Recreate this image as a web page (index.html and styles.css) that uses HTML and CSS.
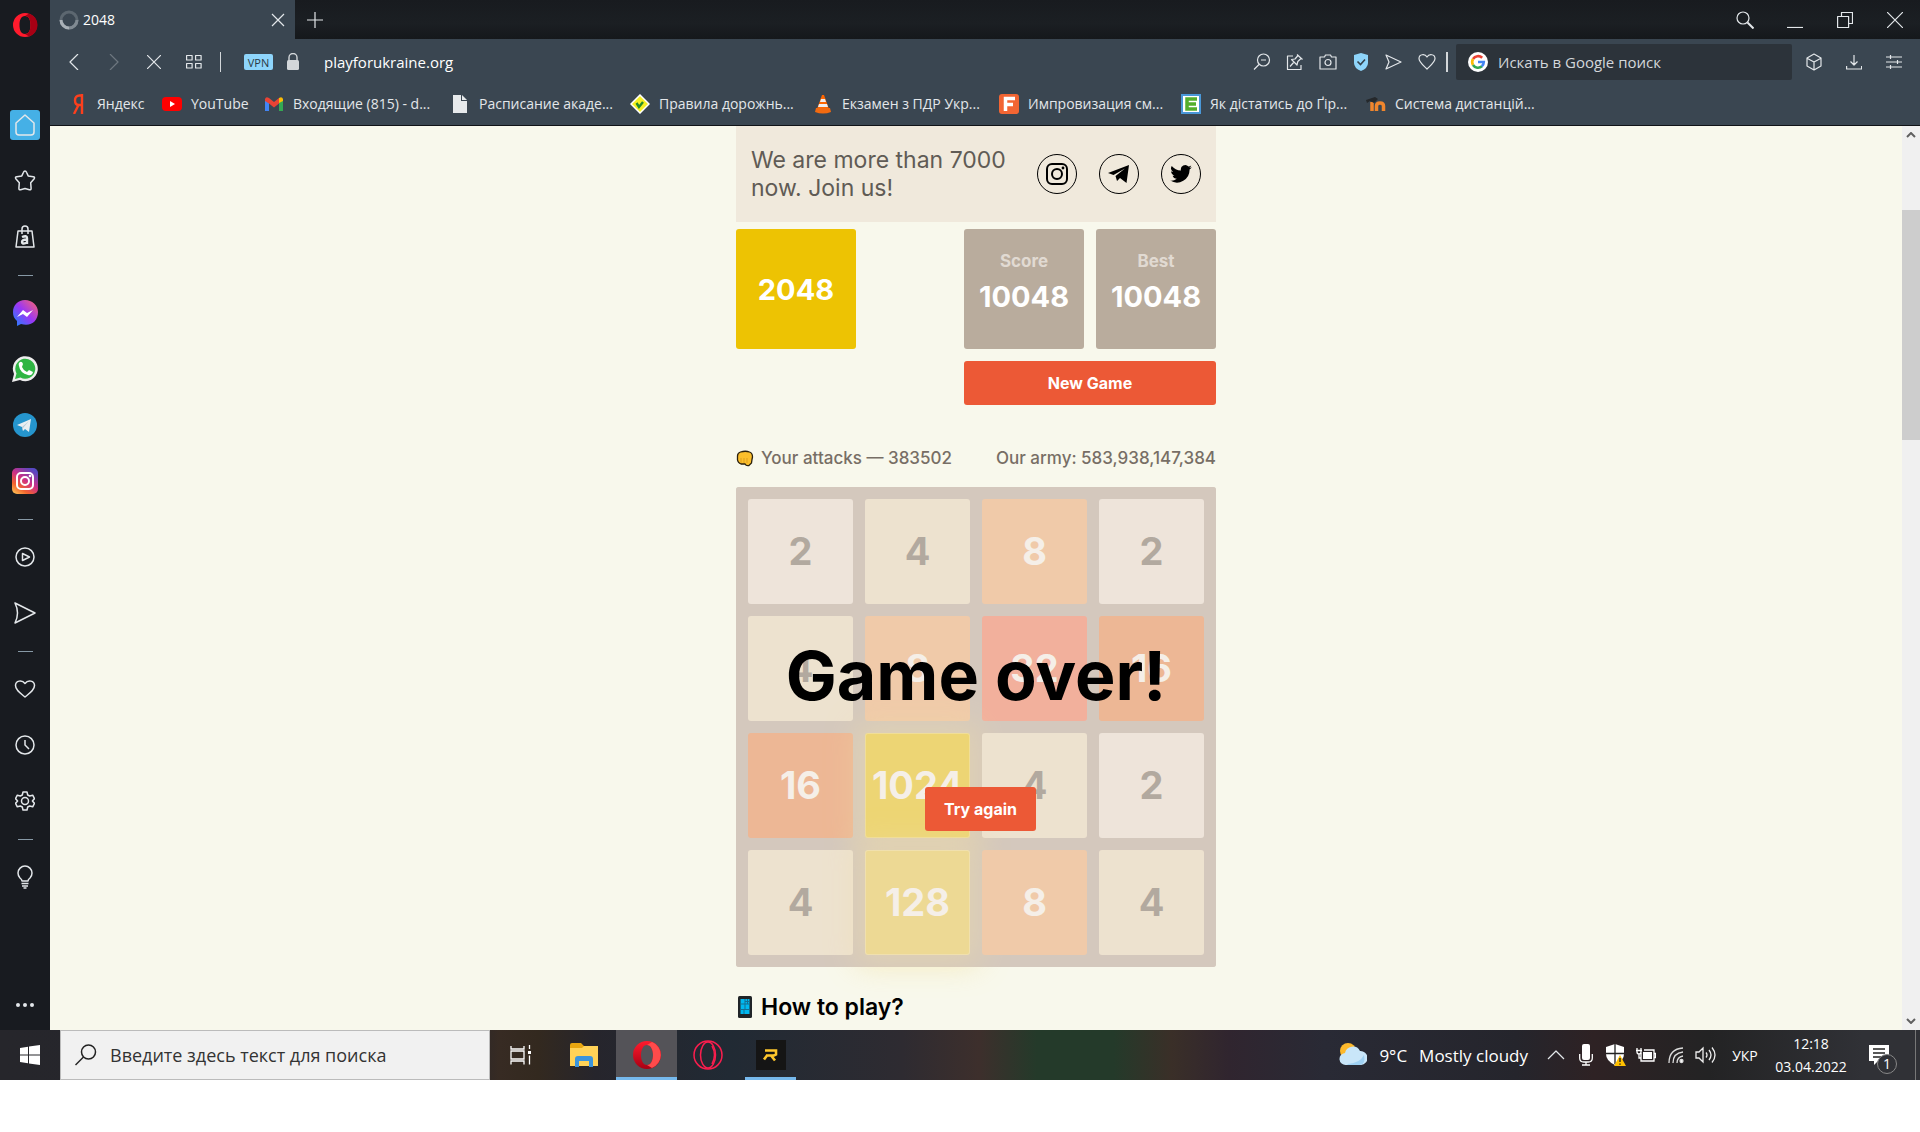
FILE: index.html
```html
<!DOCTYPE html>
<html lang="ru">
<head>
<meta charset="utf-8">
<title>2048</title>
<meta name="viewport" content="width=device-width, initial-scale=1">
<link rel="stylesheet" href="styles.css">
</head>
<body>
<div class="browser">
  <nav class="sidebar" aria-label="Opera">
    <button class="opera-menu" aria-label="Menu"><svg width="26" height="26" viewBox="0 0 26 26"><path fill="#ff1b2d" fill-rule="evenodd" d="M13 1a12 12 0 1 0 0 24 12 12 0 0 0 0-24zm0 3c4 0 5.500 4 5.500 9s-1.500 9-5.500 9-5.500-4-5.500-9S9 4 13 4z"/><path d="M13 22c4 0 5.500-4 5.500-9S17 4 13 4l4-2.500a12 12 0 0 1 0 23z" fill="#a70014"/></svg></button>
    <button class="side-item" aria-label="Home"><span class="home"><svg class="line" width="22" height="24" viewBox="0 0 22 24"><path d="M11 2 2 10v9q0 3 3 3h12q3 0 3-3v-9z"/></svg></span></button>
    <button class="side-item" aria-label="Bookmarks"><svg class="line" width="22" height="22" viewBox="0 0 22 22"><path d="M11 1q1 0 1.500 1.300l1.700 3.600 5 .8q2 .3 1 2l-3.500 4 .4 5.500q0 2-1.700 1.500L11 18.500l-4.400 1.200q-1.700.5-1.700-1.500l.4-5.500-3.500-4q-1-1.700 1-2l5-.8 1.700-3.600Q10 1 11 1z"/></svg></button>
    <button class="side-item" aria-label="Shopping"><svg class="line" width="20" height="24" viewBox="0 0 20 24"><path d="M3 6h14l2 16H1zM7 9V4q0-3 3-3t3 3v5"/><path stroke-width="2.400" d="M7 12q5-2 5 1v6M12 14.500q-5 0-5 2.500t4 1"/></svg></button>
    <hr>
    <button class="side-item" aria-label="Messenger"><svg width="26" height="26" viewBox="0 0 26 26"><defs><linearGradient id="ms" x1="0" y1="1" x2="1" y2="0"><stop stop-color="#1788ff"/><stop offset=".5" stop-color="#9b36f5"/><stop offset="1" stop-color="#ff6968"/></linearGradient></defs><path d="M13 0C6 0 1 5 1 12c0 4 1 6 4 9v5l4-2c10 3 17-3 17-12C26 5 20 0 13 0z" fill="url(#ms)"/><path d="m5 17 6-7 4 3 6-3-6 7-4-3z" fill="#fff"/></svg></button>
    <button class="side-item" aria-label="WhatsApp"><svg width="26" height="26" viewBox="0 0 26 26"><path d="M0 26 2 18A12.500 12.500 0 1 1 8 24z" fill="#eee"/><path d="m3 23 1.500-5.500A10 10 0 1 1 8.500 21.500z" fill="#2fb543"/><path d="M8 6q2-1 3 2l-1 3q1 3 5 5l2-2 4 2q-1 4-5 3Q8 17 7 10q-1-3 1-4z" fill="#fff"/></svg></button>
    <button class="side-item" aria-label="Telegram"><svg width="24" height="24" viewBox="0 0 24 24"><circle cx="12" cy="12" r="12" fill="#2595cd"/><path d="m4 12 14-6-2 13-4-3-2 2-1-4z" fill="#e9eef1"/><path d="m9 14 7-6-6 7v3z" fill="#b5cbd8"/></svg></button>
    <button class="side-item" aria-label="Instagram"><svg width="26" height="26" viewBox="0 0 26 26"><defs><linearGradient id="ig" x1="0" y1="1" x2=".7" y2="0"><stop stop-color="#ffd15c"/><stop offset=".3" stop-color="#f3652f"/><stop offset=".6" stop-color="#cd2f86"/><stop offset="1" stop-color="#5748c3"/></linearGradient></defs><rect width="26" height="26" rx="5" fill="url(#ig)"/><g fill="none" stroke="#fff" stroke-width="2"><rect x="5" y="5" width="16" height="16" rx="4"/><circle cx="13" cy="13" r="4"/></g><circle cx="18" cy="8" r="1.300" fill="#fff"/></svg></button>
    <hr>
    <button class="side-item" aria-label="Player"><svg class="line" width="20" height="20" viewBox="0 0 20 20"><circle cx="10" cy="10" r="9"/><path d="M7.500 6.500v7l7-3.500z"/></svg></button>
    <button class="side-item" aria-label="Flow"><svg class="line" width="22" height="22" viewBox="0 0 22 22"><path d="m1 1 20 10L1 21q5-10 0-20z"/></svg></button>
    <hr>
    <button class="side-item" aria-label="Favourites"><svg class="line" width="22" height="20" viewBox="0 0 22 20"><path d="M11 18C6 14 1.500 11 1.500 6.500 1.500 1.500 8 .5 11 4.500c3-4 9.500-3 9.500 2C20.500 11 16 14 11 18z"/></svg></button>
    <button class="side-item" aria-label="History"><svg class="line" width="20" height="20" viewBox="0 0 20 20"><circle cx="10" cy="10" r="9"/><path d="M10 5v5l4 4"/></svg></button>
    <button class="side-item" aria-label="Settings"><svg class="line" width="20" height="20" viewBox="0 0 20 20"><circle cx="10" cy="10" r="3.500"/><path d="M8 1h4l.7 3 2 1 3-.8 1.800 3.400L17.400 10l2.100 2.400-1.800 3.400-3-.8-2 1-.7 3H8l-.7-3-2-1-3 .8L.5 12.400 2.600 10 .5 7.600l1.800-3.400 3 .8 2-1z"/></svg></button>
    <hr>
    <button class="side-item" aria-label="Tips"><svg class="line" width="18" height="24" viewBox="0 0 18 24"><path d="M6 16q0-1.500-2-3a7 7 0 1 1 10 0q-2 1.500-2 3zM5.500 18.500h7M6 21h6M7.500 23h3"/></svg></button>
    <button class="more" aria-label="More"><svg width="20" height="6" viewBox="0 0 20 6" fill="#e3e7ea"><circle cx="3" cy="3" r="2"/><circle cx="10" cy="3" r="2"/><circle cx="17" cy="3" r="2"/></svg></button>
  </nav>

  <div class="window">
    <div class="tabstrip">
      <div class="tab">
        <svg width="20" height="20" viewBox="0 0 20 20" fill="none" stroke-width="3"><circle cx="10" cy="10" r="8" stroke="#5c6770"/><path d="M10 18a8 8 0 0 1-8-8" stroke="#a9b1b7"/><path d="M18 10a8 8 0 0 1-8 8" stroke="#808a92"/></svg>
        <span class="tab-title">2048</span>
        <button aria-label="Close tab"><svg class="line" width="14" height="14" viewBox="0 0 14 14"><path d="m1 1 12 12M13 1 1 13"/></svg></button>
      </div>
      <button class="new-tab" aria-label="New tab"><svg class="line" width="16" height="16" viewBox="0 0 16 16"><path d="M8 0v16M0 8h16"/></svg></button>
      <div class="window-controls">
        <button aria-label="Search tabs"><svg class="line" width="18" height="18" viewBox="0 0 18 18"><circle cx="7" cy="7" r="6"/><path stroke-width="2" d="m11.500 11.500 6 6"/></svg></button>
        <button aria-label="Minimise"><svg class="line" width="16" height="16" viewBox="0 0 16 16"><path d="M0 15.500h16"/></svg></button>
        <button aria-label="Restore"><svg class="line" width="16" height="16" viewBox="0 0 16 16"><path d="M.6 4.500h11v11h-11zM4.500 4.500v-4h11v11h-4"/></svg></button>
        <button aria-label="Close"><svg class="line" width="16" height="16" viewBox="0 0 16 16"><path d="m0 0 16 16M16 0 0 16"/></svg></button>
      </div>
    </div>

    <div class="toolbar">
      <div class="nav-buttons">
        <button aria-label="Back"><svg class="line" width="10" height="16" viewBox="0 0 10 16"><path d="M9 0 1 8l8 8"/></svg></button>
        <button aria-label="Forward" class="dim"><svg class="line" width="10" height="16" viewBox="0 0 10 16"><path d="m1 0 8 8-8 8"/></svg></button>
        <button aria-label="Stop"><svg class="line" width="14" height="14" viewBox="0 0 14 14"><path d="m0 0 14 14M14 0 0 14"/></svg></button>
        <button aria-label="Speed dial"><svg class="line" width="16" height="16" viewBox="0 0 16 16"><path d="M.6 1.500h5.500v4.500H.6zM9.600 1.500h5.500v4.500H9.600zM.6 9.500h5.500V14H.6zM9.600 9.500h5.500V14H9.600z"/></svg></button>
      </div>
      <span class="divider"></span>
      <button class="vpn">VPN</button>
      <svg width="14" height="18" viewBox="0 0 14 18"><path d="M3 8V4.500a4 4 0 0 1 8 0V8" fill="none" stroke="#d3d7da" stroke-width="1.400"/><rect x="1" y="7" width="12" height="10" rx="1.500" fill="#d3d7da"/></svg>
      <input class="address" type="text" aria-label="Address" value="playforukraine.org">
      <div class="page-tools">
        <button aria-label="Zoom"><svg class="line" width="18" height="18" viewBox="0 0 18 18"><circle cx="10.500" cy="7" r="6"/><path d="M8 7h5M6 11.500l-5 5"/></svg></button>
        <button aria-label="Pin"><svg class="line" width="18" height="18" viewBox="0 0 18 18"><path d="M7 3H1.500v13.500H15V12M11 1.500l5.500 5M12 2.500 9 6 5.500 6.500l5.500 5.500.8-3.500L15 5.500M8 9l-4 4.500"/></svg></button>
        <button aria-label="Snapshot"><svg class="line" width="18" height="18" viewBox="0 0 18 18"><path d="M1 4h4.500l1-2h5l1 2H17v12H1z"/><circle cx="9" cy="9.500" r="3"/></svg></button>
        <button aria-label="Blocker"><svg width="16" height="18" viewBox="0 0 16 18"><path d="m8 0 7 2v8q0 5-7 8-7-3-7-8V2z" fill="#8ed5fb"/><path d="m4.500 8.500 3 3 4.500-5" fill="none" stroke="#33404a" stroke-width="1.600"/></svg></button>
        <button aria-label="Send to Flow"><svg class="line" width="18" height="16" viewBox="0 0 18 16"><path d="m1 1 15 7L1 15l3-7z"/></svg></button>
        <button aria-label="Add bookmark"><svg class="line" width="18" height="18" viewBox="0 0 18 18"><path d="M9 16C5 12 1 9 1 5.500c0-4.500 6-5 8-1.500 2-3.500 8-3 8 1.500C17 9 13 12 9 16z"/></svg></button>
      </div>
      <span class="divider bright"></span>
      <label class="search">
        <svg width="20" height="20" viewBox="0 0 20 20"><circle cx="10" cy="10" r="10" fill="#fff"/><g fill="none" stroke-width="2.600"><path d="M5 7a6 6 0 0 1 9.200-1.300" stroke="#ea4335"/><path d="M5 13a6 6 0 0 1 0-6" stroke="#fbbc05"/><path d="M14 14.300A6 6 0 0 1 5 13" stroke="#34a853"/><path d="M10 10h5.800a6 6 0 0 1-2 4.300" stroke="#4285f4"/></g></svg>
        <input type="search" aria-label="Поиск" placeholder="Искать в Google поиск">
      </label>
      <div class="app-tools">
        <button aria-label="Crypto wallet"><svg class="line" width="16" height="18" viewBox="0 0 16 18"><path d="m8 1 7 4v8l-7 4-7-4V5zM1.500 5.500 8 9l6.500-3.500M8 9v8"/></svg></button>
        <button aria-label="Downloads"><svg class="line" width="16" height="16" viewBox="0 0 16 16"><path d="M8 1v10M4.500 7.500 8 11l3.500-3.500M.6 12v3h15v-3"/></svg></button>
        <button aria-label="Easy setup"><svg class="line" width="16" height="16" viewBox="0 0 16 16"><path d="M0 3h16M0 8h16M0 13h16M4.500 1v4M11.500 6v4M4.500 11v4"/></svg></button>
      </div>
    </div>

    <div class="bookmarks">
      <a href="#"><svg width="20" height="20" viewBox="0 0 20 20"><path d="M14 0v20M14 1.500h-2.500Q7 1.500 7 6.300T11 11h3M10.500 11 6 20" fill="none" stroke="#fc3f1d" stroke-width="2.400"/></svg>Яндекс</a>
      <a href="#"><svg width="20" height="20" viewBox="0 0 20 20"><rect y="3" width="20" height="14" rx="4" fill="#f00"/><path d="M8 7v6l5-3z" fill="#fff"/></svg>YouTube</a>
      <a href="#"><svg width="20" height="20" viewBox="0 0 20 20"><path d="M1 17V5h4v12z" fill="#4285f4"/><path d="M15 17V5h4v12z" fill="#34a853"/><path d="M15 9V4q3-2 4 1v2z" fill="#fbbc04"/><path d="M1 5q1-3 4-1l5 4 5-4v5.500l-5 4-5-4L1 7z" fill="#ea4335"/></svg>Входящие (815) - d...</a>
      <a href="#"><svg width="20" height="20" viewBox="0 0 20 20"><path d="M3 1h8v6h6v12H3z" fill="#e7eaec"/><path d="m12 1 5 5h-5z" fill="#e7eaec"/></svg>Расписание акаде...</a>
      <a href="#"><svg width="20" height="20" viewBox="0 0 20 20"><path d="m10 1 9 9-9 9-9-9z" fill="#f5ef22" stroke="#fff" stroke-width="1.500"/><path d="m6.500 9 2.500 4 4-5" fill="none" stroke="#268b2a" stroke-width="2.400"/></svg>Правила дорожнь...</a>
      <a href="#"><svg width="20" height="20" viewBox="0 0 20 20"><path d="M9 1h2l5 14H4z" fill="#f60"/><path d="M8 5h4l1 3H7zM6 10h8l1 3H5z" fill="#eee"/><path d="M3 14h14l1 4q-8 3-16 0z" fill="#f26a10"/></svg>Екзамен з ПДР Укр...</a>
      <a href="#"><svg width="20" height="20" viewBox="0 0 20 20"><rect width="20" height="20" rx="3" fill="#f26533"/><path d="M6.500 17V4.500H16M6.500 10.500H14" fill="none" stroke="#fff" stroke-width="3.500"/></svg>Импровизация см...</a>
      <a href="#"><svg width="20" height="20" viewBox="0 0 20 20"><rect width="20" height="20" fill="#4a98d8"/><rect x="2" y="2" width="16" height="16" fill="#fff"/><path d="M16 5H6v10h10M6 10h9" fill="none" stroke="#54ae2c" stroke-width="3.500"/></svg>Як дістатись до Ґір...</a>
      <a href="#"><svg width="20" height="20" viewBox="0 0 20 20"><path d="M6 17V8M10.500 17v-5q0-3 3.500-3t3.500 3v5" fill="none" stroke="#f0862d" stroke-width="3.500"/><path d="m0 6 9-3 3 2-4 4-4-2-3 2z" fill="#25282b"/></svg>Система дистанцій...</a>
    </div>

    <div class="viewport">
      <main class="page">
        <div class="game">
          <section class="banner">
            <p>We are more than 7000 now. Join us!</p>
            <a href="#" aria-label="Instagram"><svg width="22" height="22" viewBox="0 0 22 22"><rect x="1" y="1" width="20" height="20" rx="5" fill="none" stroke="#000" stroke-width="2"/><circle cx="11" cy="11" r="5" fill="none" stroke="#000" stroke-width="2"/><circle cx="17" cy="5" r="1.400"/></svg></a>
            <a href="#" aria-label="Telegram"><svg width="24" height="20" viewBox="0 0 24 20"><path d="M1 9 22 1l-2.500 18-6.500-5-3 3-1.500-5L18 4.500 6.500 11z"/></svg></a>
            <a href="#" aria-label="Twitter"><svg width="22" height="18" viewBox="0 0 24 20"><path d="M24 2.400c-.9.400-1.800.7-2.800.8 1-.6 1.800-1.600 2.200-2.700-1 .6-2 1-3.100 1.200A4.900 4.900 0 0 0 11.900 6C7.800 5.900 4.200 4 1.700 1a4.900 4.900 0 0 0 1.500 6.500c-.8 0-1.600-.2-2.200-.6 0 2.300 1.600 4.400 3.900 4.900-.7.200-1.500.2-2.200.1.600 2 2.400 3.300 4.600 3.400A9.900 9.900 0 0 1 0 17.300 14 14 0 0 0 21.500 4.900c1-.7 1.800-1.600 2.500-2.500z"/></svg></a>
          </section>
          <header class="summary">
            <h1>2048</h1>
            <div class="box score"><span>Score</span><strong>10048</strong></div>
            <div class="box"><span>Best</span><strong>10048</strong></div>
            <button class="action new-game">New Game</button>
          </header>
          <div class="stats">
            <span><svg width="18" height="18" viewBox="0 0 18 18"><path d="M1.500 6q0-3 3-4 5-1.500 9 0 3 1 3 5-.5 2-1 6l-2.500 2.500q-3 .5-4-1.500H5q-3-1-3.500-4z" fill="#fcbf2c" stroke="#2b210e" stroke-width="1.300"/><path d="M5 8v5M8 8v5M11 8v5" stroke="#dd9f20"/></svg>Your attacks — 383502</span>
            <span>Our army: 583,938,147,384</span>
          </div>
          <div class="board">
            <div class="tile t2">2</div><div class="tile t4">4</div><div class="tile t8">8</div><div class="tile t2">2</div>
            <div class="tile t4">4</div><div class="tile t8">8</div><div class="tile t32">32</div><div class="tile t16">16</div>
            <div class="tile t16">16</div><div class="tile t1024">1024</div><div class="tile t4">4</div><div class="tile t2">2</div>
            <div class="tile t4">4</div><div class="tile t128">128</div><div class="tile t8">8</div><div class="tile t4">4</div>
            <div class="game-over"><p>Game over!</p><button class="action">Try again</button></div>
          </div>
          <h2><svg width="18" height="24" viewBox="0 0 18 24"><rect x="2" y="1" width="14" height="22" rx="1.500" fill="#202427"/><path d="M4.500 4h9v15h-9z" fill="#00b8f0"/><path d="M4 9h10M4 14.500h10M9 4v10M11.500 4v5M9 6.500h5M8 19v-4" stroke="#147094"/></svg>How to play?</h2>
        </div>
      </main>
      <div class="scrollbar" aria-hidden="true">
        <svg width="10" height="6" viewBox="0 0 10 6"><path d="m1 5 4-4 4 4" fill="none" stroke="#606060" stroke-width="2"/></svg>
        <span class="thumb"></span>
        <svg width="10" height="6" viewBox="0 0 10 6"><path d="m1 1 4 4 4-4" fill="none" stroke="#606060" stroke-width="2"/></svg>
      </div>
    </div>
  </div>
</div>

<footer class="taskbar">
  <button class="start" aria-label="Start"><svg width="20" height="20" viewBox="0 0 20 20" fill="#fff"><path d="m0 3 8-1.200V9.500H0zM9 1.600 20 0v9.500H9zM0 10.500h8v7.700L0 17zM9 10.500h11V20L9 18.400z"/></svg></button>
  <label class="task-search">
    <svg width="22" height="22" viewBox="0 0 22 22" fill="none" stroke="#222" stroke-width="1.500"><circle cx="13.500" cy="8" r="7"/><path d="m8.500 13-8 8"/></svg>
    <input type="search" aria-label="Windows" placeholder="Введите здесь текст для поиска">
  </label>
  <button class="task" aria-label="Task view"><svg width="22" height="20" viewBox="0 0 22 20" fill="none" stroke="#fff" stroke-width="1.300"><path d="M1 1v3h13V1M1 6h13v8H1zM1 19.500V16h13v3.500M19.500 0v4M19.500 10.500v9"/><path d="M18 6h3v3h-3z" fill="#fff" stroke="none"/></svg></button>
  <button class="task" aria-label="Explorer"><svg width="28" height="24" viewBox="0 0 28 24"><path d="M0 2q0-2 2-2h9l3 3h12q2 0 2 2v17H0z" fill="#e8a610"/><path d="M0 5h12l2-2h14v20H0z" fill="#ffd257"/><path d="M5 24v-8q0-3 3-3h12q3 0 3 3v8h-4v-6H9v6z" fill="#3a94dc"/></svg></button>
  <button class="task active" aria-label="Opera"><svg width="30" height="30" viewBox="0 0 30 30"><defs><linearGradient id="op" y2="1" x2="0"><stop stop-color="#ff1b2d"/><stop offset="1" stop-color="#a70014"/></linearGradient></defs><path fill="url(#op)" fill-rule="evenodd" d="M15 1a14 14 0 1 0 0 28 14 14 0 0 0 0-28zm0 4c4 0 6 5 6 10s-2 10-6 10-6-5-6-10 2-10 6-10z"/><path d="M15 25c4 0 6-5 6-10S19 5 15 5l5-3a14 14 0 0 1 0 26z" fill="#ff4b4b"/></svg></button>
  <button class="task" aria-label="Opera GX"><svg width="30" height="30" viewBox="0 0 30 30" fill="none" stroke="#fa1e4e" stroke-width="1.500"><circle cx="15" cy="15" r="14"/><ellipse cx="15" cy="15" rx="7.500" ry="13"/><path d="M19 6q5 9 0 18"/></svg></button>
  <button class="task open" aria-label="Rockstar"><svg width="30" height="30" viewBox="0 0 30 30"><path d="M0 0h30v30H0z" fill="#151515"/><path d="M9 10.500h11v4l-2 1h-8M15 15.500l4 5M8 19.500l3-4" fill="none" stroke="#ffc72c" stroke-width="2.600"/></svg></button>
  <div class="tray">
    <button class="weather"><svg width="28" height="24" viewBox="0 0 28 24"><circle cx="9" cy="8" r="8" fill="#fdb92c"/><path d="M7 22a6 6 0 0 1-1-12 8 8 0 0 1 15-2 7 7 0 0 1 1 14z" fill="#c9e6f9"/><path d="M9 21q12-1 16-9 2 9-4 10H8z" fill="#9fd1f3"/></svg><span>9°C</span><span>Mostly cloudy</span></button>
    <button aria-label="Hidden icons"><svg class="line" width="18" height="12" viewBox="0 0 18 12"><path d="m1 10 8-8 8 8"/></svg></button>
    <button aria-label="Microphone"><svg width="14" height="22" viewBox="0 0 14 22"><rect x="3" width="8" height="16" rx="2" fill="#fff"/><path d="M.7 10v4q0 4 4 4h4.600q4 0 4-4v-4M7 18v3M3 21h8" fill="none" stroke="#fff" stroke-width="1.300"/></svg></button>
    <button aria-label="Security"><svg width="20" height="22" viewBox="0 0 20 22"><path d="m9 0 9 3v7q0 7-9 11-9-4-9-11V3z" fill="#fff"/><path d="M9 0v20M0 9.500h18" stroke="#222" stroke-width="1.300"/><path d="m14 11 6 11H8z" fill="#ffc000"/><path d="M14 14v4M14 19.500v1.200" stroke="#222" stroke-width="1.400"/></svg></button>
    <button aria-label="Battery"><svg width="20" height="16" viewBox="0 0 20 16"><path d="M5 6v8h13V3H8M18 6.500h1.500v4H18" fill="none" stroke="#fff" stroke-width="1.300"/><path d="M7 5h9v7H7z" fill="#fff"/><path d="M1 1v4q0 2 2 2t2-2V1M3 7v4h2M0 3.500h6" fill="none" stroke="#fff" stroke-width="1.300"/></svg></button>
    <button aria-label="Network"><svg width="16" height="18" viewBox="0 0 16 18" fill="none" stroke="#ddd" stroke-width="1.300"><path d="M1 17Q1 3 15 2M5 17Q5 7 15 6M9 17q0-6 6-7"/><circle cx="13.500" cy="15" r="1.500" fill="#fff"/></svg></button>
    <button aria-label="Volume"><svg width="22" height="18" viewBox="0 0 22 18" fill="none" stroke="#eee" stroke-width="1.300"><path d="M1 6h3l4-4v14l-4-4H1zM11 6.500q2 2.500 0 5M14 4q4 5 0 10M17 1.500q6 7.500 0 15"/></svg></button>
    <button class="lang">УКР</button>
    <button class="clock"><time>12:18</time><time>03.04.2022</time></button>
    <button class="notes" aria-label="Notifications"><svg width="20" height="20" viewBox="0 0 20 20"><path d="M0 0h20v16H9l-4 4v-4H0z" fill="#fff"/><path d="M4 4h12M4 8h12M4 12h9" stroke="#222" stroke-width="1.300"/></svg><span class="badge">1</span></button>
  </div>
</footer>
</body>
</html>
```
FILE: styles.css
```css
* { box-sizing: border-box; }

body {
  margin: 0;
  background: #fff;
  font-family: "Open Sans", "Noto Sans", sans-serif;
  font-size: 14px;
  color: #e3e7ea;
}

button {
  padding: 0;
  border: 0;
  background: none;
  color: inherit;
  font: inherit;
  display: flex;
  align-items: center;
  justify-content: center;
}

input {
  min-width: 0;
  padding: 0;
  border: 0;
  outline: 0;
  background: none;
  color: inherit;
  font: inherit;
}

svg { display: block; flex: none; }
a { color: inherit; text-decoration: none; }
p, h1, h2 { margin: 0; }

.line {
  fill: none;
  stroke: #e3e7ea;
  stroke-width: 1.2;
  stroke-linejoin: round;
}

.browser { display: grid; grid-template-columns: 50px minmax(0, 1fr); }

/* Sidebar */
.sidebar { display: flex; flex-direction: column; background: #181b20; }
.opera-menu { height: 50px; margin-bottom: 47px; }
.side-item { height: 56px; }
.side-item .line { stroke-width: 1.5; }
.home {
  display: grid;
  place-items: center;
  width: 30px;
  height: 30px;
  border-radius: 3px;
  background: #45b0e6;
}
.sidebar hr {
  width: 15px;
  height: 1px;
  margin: 10px auto 9px;
  border: 0;
  background: #8799a6;
}
.more { height: 50px; margin-top: auto; }

/* Tabs */
.tabstrip {
  display: flex;
  height: 39px;
  background: linear-gradient(#181b1f, #1b1f23 60%, #15181b);
}
.tab {
  display: flex;
  align-items: center;
  gap: 4px;
  width: 245px;
  padding: 0 10px 0 9px;
  background: #3a4651;
  color: #fff;
}
.tab-title { flex: 1; }
.new-tab { width: 40px; }
.window-controls { display: flex; margin-left: auto; }
.window-controls button { width: 50px; }

/* Toolbar */
.toolbar {
  display: flex;
  align-items: center;
  height: 46px;
  padding: 0 6px 0 4px;
  background: #3a4651;
}
.nav-buttons, .page-tools, .app-tools { display: flex; }
.nav-buttons button, .app-tools button { width: 40px; height: 36px; }
.page-tools button { width: 33px; height: 36px; }
.dim { opacity: .3; }
.divider { width: 1px; height: 20px; margin: 0 23px 0 6px; background: #d3d7da; }
.divider.bright { width: 2px; margin: 0 8px 0 3px; }
.vpn {
  width: 29px;
  height: 16px;
  margin-right: 13px;
  border-radius: 2px;
  background: #8ed5fb;
  color: #2c3944;
  font-size: 11px;
}
.address { flex: 1; margin-left: 24px; color: #fff; font-size: 15px; }
.search {
  display: flex;
  align-items: center;
  gap: 10px;
  width: 336px;
  height: 36px;
  margin-right: 2px;
  padding: 0 12px;
  border-radius: 2px;
  background: #2c333a;
}
.search input { flex: 1; font-size: 15px; }
.search input::placeholder { color: #d3d7da; opacity: 1; }

/* Bookmarks */
.bookmarks {
  display: grid;
  grid-template-columns: 94px 102px 186px 180px 183px 186px 182px 185px auto;
  height: 41px;
  padding: 0 0 3px 18px;
  border-bottom: 1px solid #101317;
  background: #3a4651;
}
.bookmarks a { display: flex; align-items: center; gap: 9px; white-space: nowrap; }

/* Page */
.viewport { display: flex; }
.page {
  flex: 1;
  background: #f8f8ec;
  color: #776e65;
  font-family: Inter, "Liberation Sans", sans-serif;
}
.scrollbar {
  display: flex;
  flex-direction: column;
  align-items: center;
  width: 18px;
  padding: 6px 0;
  background: #f0f0f0;
}
.thumb { width: 100%; height: 230px; margin: 72px 0 auto; background: #cdcdcd; }

.game { width: 480px; margin: 0 auto; padding-bottom: 8px; }

.banner {
  display: flex;
  align-items: center;
  gap: 22px;
  height: 96px;
  margin-bottom: 7px;
  padding: 0 15px 0 15px;
  background: #f0e9dc;
}
.banner p { flex: 1; font-size: 23px; line-height: 28px; color: #605b55; }
.banner a {
  display: grid;
  place-items: center;
  width: 40px;
  height: 40px;
  border: 1px solid #000;
  border-radius: 50%;
  fill: #000;
}

.summary {
  display: grid;
  grid-template-columns: 120px 1fr 120px 120px;
  grid-template-rows: 120px 44px;
  column-gap: 12px;
  row-gap: 12px;
  color: #fff;
}
.summary h1 {
  display: grid;
  place-items: center;
  border-radius: 3px;
  background: #edc303;
  font-size: 29px;
}
.box {
  display: flex;
  flex-direction: column;
  align-items: center;
  padding-top: 20px;
  border-radius: 3px;
  background: #b9ac9d;
}
.box.score { grid-column: 3; }
.box span { font-size: 17px; font-weight: 700; line-height: 24px; color: #e1dad2; }
.box strong { font-size: 29px; line-height: 48px; }
.action {
  height: 44px;
  border-radius: 3px;
  background: #ec5936;
  color: #fff;
  font-family: Inter, "Liberation Sans", sans-serif;
  font-size: 16px;
  font-weight: 700;
}
.new-game { grid-column: 3 / 5; }

.stats {
  display: flex;
  justify-content: space-between;
  margin: 41px 0 16px;
  font-size: 17px;
  font-weight: 500;
  line-height: 25px;
}
.stats span { display: flex; align-items: center; gap: 7px; }

.board {
  position: relative;
  display: grid;
  grid-template-columns: repeat(4, 1fr);
  grid-auto-rows: 105px;
  gap: 12px;
  padding: 12px;
  border-radius: 3px;
  background: #bbada0;
}
.tile {
  display: grid;
  place-items: center;
  padding-bottom: 2px;
  border-radius: 3px;
  color: #fdfaf7;
  font-size: 38px;
  font-weight: 700;
}
.t2, .t4 { color: #776e65; }
.t2 { background: #eee4da; }
.t4 { background: #ede0c4; }
.t8 { background: #f2b179; }
.t16 { background: #ec8a50; }
.t32 { background: #f67c5f; }
.t128 { background: #edcf4e; }
.t1024 { background: #edc70e; }
.t128, .t1024 {
  box-shadow: 0 0 30px 10px rgba(243, 215, 116, .4), inset 0 0 0 1px rgba(255, 255, 255, .3);
}
.game-over {
  position: absolute;
  inset: 0;
  display: flex;
  flex-direction: column;
  align-items: center;
  padding-top: 158px;
  border-radius: 3px;
  background: rgba(238, 228, 218, .5);
}
.game-over p { color: #000; font-size: 68px; font-weight: 700; line-height: 60px; }
.game-over .action { margin: 82px 0 0 9px; padding: 0 19px; }

.game h2 {
  display: flex;
  align-items: center;
  gap: 7px;
  margin-top: 25px;
  color: #000;
  font-size: 23px;
  font-weight: 600;
  line-height: 30px;
}

/* Taskbar */
.taskbar {
  display: flex;
  height: 50px;
  background: linear-gradient(90deg, #26262b 0, #25252d 24%, #372b23 26%, #33291f 28%, #26252c 31%, #212a34 38%, #2e2b31 47%, #3d2f2c 51%, #243a2a 54%, #243a2a 58%, #3a2f28 61%, #30252f 64%, #292a35 69%, #25252c 79%, #2e2224 83%, #232324 89%, #303136 97%);
  color: #fff;
}
.start { width: 60px; }
.task-search {
  display: flex;
  align-items: center;
  gap: 13px;
  width: 430px;
  padding: 0 14px;
  border: 1px solid #bbb;
  background: #f1f1f1;
  color: #333;
  font-size: 18px;
}
.task-search input { flex: 1; }
.task-search input::placeholder { color: #333; opacity: 1; }
.task { width: 61px; margin-right: 2px; }
.active { background: #545358; border-bottom: 3px solid #76b9ed; padding-top: 3px; margin-right: 0; }
.open { width: 51px; margin-left: 5px; border-bottom: 3px solid #76b9ed; padding-top: 3px; }
.tray { display: flex; margin-left: auto; padding-right: 10px; border-right: 1px solid #777; margin-right: 4px; }
.tray > button { width: 30px; }
.tray > .weather { width: auto; gap: 12px; margin-right: 13px; font-size: 17px; }
.tray > .lang { width: 48px; }
.tray > .clock {
  flex-direction: column;
  width: 84px;
  gap: 3px;
  line-height: 20px;
}
.tray > .notes { position: relative; width: 52px; }
.badge {
  position: absolute;
  left: 24px;
  top: 24px;
  width: 20px;
  height: 20px;
  border: 1px solid #888;
  border-radius: 50%;
  background: #303136;
  line-height: 18px;
  text-align: center;
}
```
